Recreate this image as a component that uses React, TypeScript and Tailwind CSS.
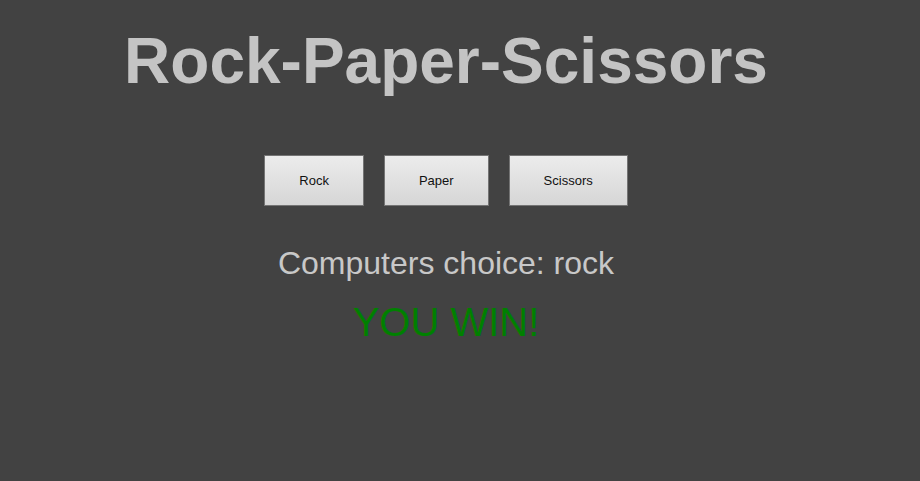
import { useState } from "react"

const choices = ["Rock", "Paper", "Scissors"]

export default function App() {
  const [computer] = useState("rock")
  const [result] = useState("YOU WIN!")

  return (
    <div className="min-h-screen w-full bg-[#424242] font-['Liberation_Sans',Arial,sans-serif]">
      <div className="flex w-[892px] flex-col items-center">
        <h1 className="pt-[25px] text-[64px] font-bold leading-[72px] text-[#c4c4c4]">
          Rock-Paper-Scissors
        </h1>

        <div className="mt-[58px] flex gap-[20px]">
          {choices.map((c) => (
            <button
              key={c}
              className="flex h-[51px] items-center border border-[#747474] bg-gradient-to-b from-[#ececec] to-[#d6d6d6] px-[34px] text-[13px] text-[#111]"
            >
              {c}
            </button>
          ))}
        </div>

        <p className="mt-[39px] text-[32px] leading-[37px] text-[#c8c8c8]">
          Computers choice: {computer}
        </p>
        <p className="mt-[17px] text-[40px] leading-[46px] text-[#008000]">{result}</p>
      </div>
    </div>
  )
}
